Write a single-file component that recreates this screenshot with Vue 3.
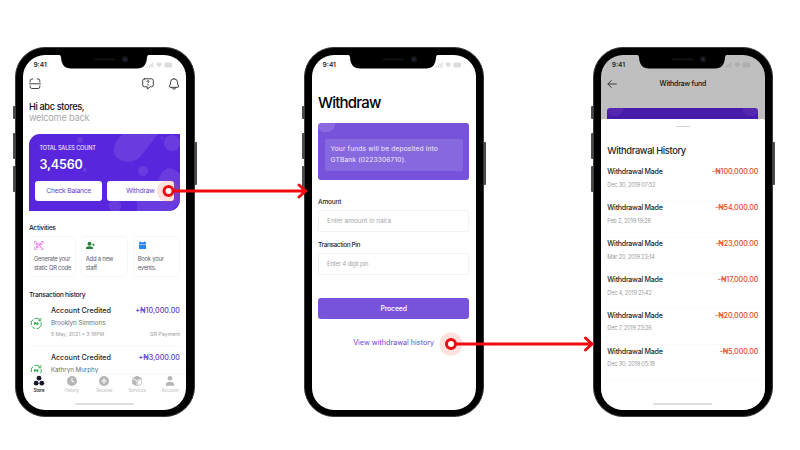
<script setup>
const activities = [
  { id: 'qr', lines: ['Generate your', 'static QR code'] },
  { id: 'staff', lines: ['Add a new', 'staff'] },
  { id: 'event', lines: ['Book your', 'events.'] },
]
const credits = [
  { name: 'Brooklyn Simmons', amount: '+₦10,000.00', date: '5 May, 2021 • 3:16PM', type: 'QR Payment' },
  { name: 'Kathryn Murphy', amount: '+₦3,000.00' },
]
const tabs = ['Store', 'History', 'Receive', 'Services', 'Account']
const withdrawals = [
  { date: 'Dec 30, 2019 07:52', amount: '-₦100,000.00' },
  { date: 'Feb 2, 2019 19:28', amount: '-₦54,000.00' },
  { date: 'Mar 20, 2019 23:14', amount: '-₦23,000.00' },
  { date: 'Dec 4, 2019 21:42', amount: '-₦17,000.00' },
  { date: 'Dec 7, 2019 23:26', amount: '-₦20,000.00' },
  { date: 'Dec 30, 2019 05:18', amount: '-₦5,000.00' },
]
const phones = ['store', 'withdraw', 'history']
const links = [{ x: 168.5, y: 191, e: 307 }, { x: 451, y: 344, e: 593.5 }]
</script>

<template>
  <main class="board">
    <section v-for="phone in phones" :key="phone" class="phone">
      <i class="key mute"></i><i class="key up"></i><i class="key down"></i><i class="key power"></i>
      <div class="screen" :class="phone">
        <div class="status">
          <span class="time">9:41</span>
          <svg class="signal" width="26" height="6" viewBox="0 0 26 6">
            <path d="M0 4h1.2v1.5H0zM1.8 3H3v2.5H1.8zM3.600 1.700h1.200v3.800H3.600zM5.300.5h1.200v5H5.300z" />
            <path d="M9 1.900Q12.200-.8 15.400 1.900L12.200 5.500z" />
            <rect x="17.500" y=".6" width="7.500" height="4.800" rx="1.200" />
          </svg>
        </div>

        <template v-if="phone === 'store'">
          <header class="tools">
            <svg width="12" height="12" viewBox="0 0 12 12" class="line">
              <path d="M1.200 4V2.600Q1.200 1 2.800 1H3.800M8.200 1H9.200Q10.800 1 10.800 2.600V4M.5 5.800H11.500M1.200 7.800V8.800Q1.200 10.500 2.800 10.500H9.200Q10.800 10.500 10.800 8.800V7.800" />
            </svg>
            <svg width="12" height="12" viewBox="0 0 12 12" class="line help">
              <path d="M2.500.8H9.500Q11.300.8 11.300 2.600V7Q11.300 8.800 9.500 8.800H8.300L5.300 11V8.800H2.500Q.7 8.800.7 7V2.600Q.7.8 2.500.8Z" />
              <path d="M4.900 3.600Q5 2.700 6 2.700 7.200 2.800 7 3.800 6.800 4.400 6 5M6 6.500v.5" />
            </svg>
            <svg width="12" height="12" viewBox="0 0 12 12" class="line">
              <path d="M6 .7Q9.300.8 9.500 4.200V6L10.600 8Q11 9.100 10 9.300H2Q1 9.100 1.400 8L2.500 6V4.200Q2.700.8 6 .7ZM4.200 9.600Q4.500 11.200 6 11.200T7.800 9.600" />
            </svg>
          </header>
          <div class="greet"><b>Hi abc stores,</b><span>welcome back</span></div>
          <div class="sales">
            <svg class="blobs" width="151" height="78" viewBox="0 0 151 78">
              <path d="M93 0h36L112 22Q104 30 94 27 80 22 87 8z" />
              <circle cx="143" cy="9" r="8" /><circle cx="133" cy="4" r="1.500" />
              <circle cx="114" cy="37" r="5" /><circle cx="51" cy="6" r="3" /><circle cx="56" cy="36" r="2" />
              <path d="M123 60 132 40Q138 31 146 36L151 40V68L141 78H108V65Z" />
              <circle cx="86" cy="72" r="6" />
            </svg>
            <small>TOTAL SALES COUNT</small>
            <strong>3,4560</strong>
            <div class="actions"><button>Check Balance</button><button>Withdraw</button></div>
          </div>
          <h3 class="sub act">Activities</h3>
          <div class="cards">
            <article v-for="a in activities" :key="a.id">
              <svg v-if="a.id === 'qr'" width="10" height="9" viewBox="0 0 10 9" fill="none" stroke="#e267df" stroke-width=".8">
                <path d="M.6 2.600V.6H2.700M7 .6H9V2.600M9 6.300V8.400H7M2.700 8.400H.6V6.300M2.200 2.200h1.800v1.600H2.200zM5.700 2.200h1.700v1.600H5.700zM2.200 5.300h1.800v1.500H2.200zM5.700 5.200 7.500 6.900M7.400 5.100 5.600 6.800M4.300 4.500h1.500" />
              </svg>
              <svg v-else-if="a.id === 'staff'" width="10" height="9" viewBox="0 0 10 9" fill="#2b7e3a">
                <circle cx="3.500" cy="2.800" r="2" /><path d="M0 8V7Q0 5.400 3.500 5.300 7 5.400 7 7V8zM6 3.500h1V2.600h.8v.9h1v.8h-1v.9H7v-.9H6z" />
              </svg>
              <svg v-else width="10" height="9" viewBox="0 0 10 9" fill="#2786ef">
                <path d="M1 1.300H2V.6H3V1.300H6V.6H7V1.300H8V3H1zM1 3.500H8V7.400Q8 8 7.400 8H1.600Q1 8 1 7.400z" />
              </svg>
              <p v-for="l in a.lines" :key="l">{{ l }}</p>
            </article>
          </div>
          <h3 class="sub tx">Transaction history</h3>
          <div class="credits">
            <div v-for="c in credits" :key="c.name" class="credit">
              <svg width="13" height="13" viewBox="0 0 13 13" fill="none" stroke="#39a957" stroke-width="1">
                <path d="M8.500 1.700A5 5 0 0 0 4.500 1.600M3 2.500A5 5 0 0 0 1.400 8M2 9.400A5 5 0 0 0 5 11.500M6.500 11.700A5 5 0 0 0 11.100 5.200M11.700 1 9.200 3.600M9 1.500V3.800H11.300" />
                <path d="M4.700 8.200V5L7.700 8.200V5M4 6.600H8.400" />
              </svg>
              <div class="info">
                <div class="pair"><b>Account Credited</b><em>{{ c.amount }}</em></div>
                <div class="name">{{ c.name }}</div>
                <div v-if="c.date" class="pair meta"><span>{{ c.date }}</span><span>{{ c.type }}</span></div>
              </div>
            </div>
          </div>
          <nav>
            <div v-for="(t, i) in tabs" :key="t" :class="{ on: i === 0 }">
              <svg width="12" height="12" viewBox="0 0 12 12" fill="currentColor">
                <g v-if="i === 0"><circle cx="6" cy="3.200" r="2.400" /><circle cx="3.200" cy="8.200" r="2.400" /><circle cx="8.800" cy="8.200" r="2.400" /></g>
                <g v-else-if="i === 1"><circle cx="6" cy="6" r="5" /><path d="M6 3V6.300L8.300 7" stroke="#fff" fill="none" /></g>
                <g v-else-if="i === 2"><circle cx="6" cy="6" r="5" /><path d="M6 3.300V8.700M3.300 6H8.700" stroke="#fff" stroke-width="1.200" /></g>
                <g v-else-if="i === 3"><path d="M6 .8 10.600 2.900 6 5.200 1.400 2.900zM1.200 3.700 5.600 5.900V11.200L1.200 9z" /><path d="M6.300 5.800 10.600 3.700V8.900L6.300 11z" fill="none" stroke="currentColor" stroke-width=".7" /></g>
                <g v-else><circle cx="6" cy="3.300" r="2.300" /><path d="M1.700 10.700Q1.400 6.700 6 6.700T10.300 10.700z" /></g>
              </svg>
              <span>{{ t }}</span>
            </div>
          </nav>
          <i class="home"></i>
        </template>

        <template v-else-if="phone === 'withdraw'">
          <h1>Withdraw</h1>
          <div class="notice"><div><p>Your funds will be deposited into</p><p>GTBank (0223306710).</p></div></div>
          <label>Amount</label>
          <div class="field">Enter amount in naira</div>
          <label class="tight">Transaction Pin</label>
          <div class="field pin">Enter 4 digit pin</div>
          <button class="proceed">Proceed</button>
          <a>View withdrawal history</a>
        </template>

        <template v-else>
          <header class="bar">
            <svg width="10" height="8" viewBox="0 0 10 8" class="line"><path d="M4.300.6.900 4 4.300 7.400M1 4H9.300" /></svg>
            <b>Withdraw fund</b>
          </header>
          <div class="peek"></div>
          <div class="sheet">
            <i class="grip"></i>
            <h2>Withdrawal History</h2>
            <div v-for="w in withdrawals" :key="w.date" class="wrow">
              <div class="pair"><b>Withdrawal Made</b><em>{{ w.amount }}</em></div>
              <span>{{ w.date }}</span>
            </div>
            <i class="home"></i>
          </div>
        </template>
      </div>
      <svg class="notch" width="92" height="16" viewBox="0 0 92 16">
        <path d="M0 0H92Q89.500.3 89 3 88.500 14.500 79 14.500H13Q3.500 14.500 3 3 2.500.3 0 0Z" fill="#000" />
        <rect x="36" y="4.500" width="21" height="1.800" rx=".9" fill="#151517" />
        <circle cx="67" cy="5.300" r="3" fill="#15171d" /><circle cx="67" cy="5.300" r="1.200" fill="#232a3c" />
      </svg>
    </section>

    <svg class="flow" width="800" height="450" viewBox="0 0 800 450" fill="none" stroke="#f00a10">
      <g v-for="f in links" :key="f.x">
        <circle :cx="f.x" :cy="f.y" r="11.500" fill="#f44336" fill-opacity=".16" stroke="none" />
        <path :d="`M${f.x + 5} ${f.y}H${f.e - 1}M${f.e - 8} ${f.y - 6}L${f.e - 1.5} ${f.y}L${f.e - 8} ${f.y + 6}`" stroke-width="2.900" stroke-linecap="round" />
        <circle :cx="f.x" :cy="f.y" r="4.500" fill="#fff" stroke-width="3" />
      </g>
    </svg>
  </main>
</template>

<style>
body { background: #fff; }
</style>

<style scoped>
* { box-sizing: border-box; margin: 0; padding: 0; }
i, em { font-style: normal; }
svg { display: block; flex: none; }
.board { position: relative; width: 800px; height: 450px; overflow: hidden; display: flex; gap: 109.700px; padding: 47.300px 0 0 15px; font-family: Inter, sans-serif; color: #25252f; white-space: nowrap; }
.phone { position: relative; flex: none; width: 179.500px; height: 370px; border-radius: 30px; background: #000; border: 1.300px solid #3b3b3e; padding: 6.400px 7.200px 6.400px 6.600px; }
.key { position: absolute; left: -3px; width: 2px; background: #4b4b4e; border-radius: 1px 0 0 1px; }
.mute { top: 58px; height: 13px; } .up { top: 85px; height: 26px; } .down { top: 118px; height: 26px; }
.power { left: auto; right: -3px; top: 94px; height: 43px; border-radius: 0 1px 1px 0; }
.notch { position: absolute; left: 42px; top: 6px; }
.screen { width: 100%; height: 100%; border-radius: 22px; background: #fff; overflow: hidden; display: flex; flex-direction: column; padding: 0 6.300px; }
.status { height: 20.500px; display: flex; justify-content: space-between; align-items: center; padding: 0 7px 0 4.500px; flex: none; }
.time { font-size: 6.600px; font-weight: 600; }
.signal { fill: #dcdcdc; }
.line { fill: none; stroke: #2c2c33; stroke-width: .9; stroke-linecap: round; stroke-linejoin: round; }
.tools { display: flex; height: 17.500px; align-items: center; gap: 14.500px; }
.help { margin-left: auto; }
.greet { padding-top: 8px; height: 41px; flex: none; font-size: 9.200px; line-height: 11.800px; display: flex; flex-direction: column; letter-spacing: -.35px; }
.greet b { font-weight: 500; color: #101014; } .greet span { color: #a9a9a9; letter-spacing: -.2px; }
.sales { position: relative; height: 77.500px; flex: none; border-radius: 11px 0 11px 0; background: #5826dc; color: #fff; padding: 10px 6.500px 0; display: flex; flex-direction: column; overflow: hidden; }
.sales > * { position: relative; }
.sales .blobs { position: absolute; left: 0; top: 0; fill: #fff; opacity: .1; }
small { font-size: 5.600px; line-height: 9px; padding-left: 4px; font-weight: 500; opacity: .9; letter-spacing: -.15px; }
strong { font-size: 12.500px; line-height: 16px; padding-left: 4px; margin-top: 4px; font-weight: 600; letter-spacing: -.15px; }
.actions { display: flex; gap: 5px; margin-top: 8px; }
button { font-family: inherit; border: 0; }
.actions button { flex: 1; height: 20.500px; border-radius: 3px; background: #fff; color: #6a42d8; font-size: 6.800px; letter-spacing: -.25px; }
.sub { font-size: 6.800px; line-height: 10px; font-weight: 500; letter-spacing: -.32px; }
.act { margin-top: 12.300px; } .tx { margin-top: 12.200px; }
.cards { display: flex; gap: 4.500px; margin-top: 3px; }
.cards article { flex: 1 1 0; min-width: 0; height: 41px; border: 1px solid #f7f7f9; border-radius: 4px; padding: 4px 0 0 4px; }
.cards svg { margin-bottom: 3.500px; }
.cards p { font-size: 5.900px; line-height: 9.300px; color: #5e5e68; letter-spacing: -.25px; }
.credits { height: 73.800px; overflow: hidden; flex: none; }
.credit { height: 47px; padding-top: 6.200px; display: flex; gap: 8.500px; border-bottom: 1px solid #f8f8f8; }
.credit > svg { margin: 11.500px -1px 0 1.500px; }
.info { flex: 1; }
.pair { display: flex; justify-content: space-between; }
.credit .pair b { font-size: 7.200px; line-height: 10px; font-weight: 500; }
.pair em { font-size: 7.200px; line-height: 10px; font-weight: 500; }
.credit em { color: #6039cf; }
.name { font-size: 6.300px; line-height: 10px; margin-top: 2px; color: #6e6e76; letter-spacing: -.05px; }
.credit .meta { font-size: 5.200px; line-height: 8px; margin-top: 2px; color: #9c9ca1; }
nav { display: flex; margin: 0 -6.300px; height: 22px; flex: none; border-top: 1px solid #f7f7f7; padding-top: 1px; }
nav div { flex: 1; display: flex; flex-direction: column; align-items: center; color: #b5b5b5; }
nav span { font-size: 4.300px; line-height: 6px; margin-top: 1px; } nav .on { color: #17172b; } nav .on span { font-weight: 600; }
.home { display: block; flex: none; width: 59px; height: 1.500px; border-radius: 1px; background: #ddd; margin: 8px auto 0; }
h1 { font-size: 15px; line-height: 20px; font-weight: 500; letter-spacing: -.85px; letter-spacing: -.8px; color: #000; margin-top: 18px; }
.notice { margin-top: 9.500px; height: 57px; flex: none; border-radius: 3px; background: radial-gradient(circle at 8px 0, #8a6ae1 9px, transparent 9.500px), #7653da; padding: 16px 6.500px 0; }
.notice div { height: 32px; border-radius: 2px; background: #8668df; padding: 5.500px 6px; color: #f1edfc; font-size: 6.700px; line-height: 10.500px; letter-spacing: .12px; }
label { font-size: 6.500px; line-height: 9px; font-weight: 500; margin-top: 18px; letter-spacing: -.2px; }
.tight { letter-spacing: -.4px; }
.field { height: 22px; border: 1px solid #f2f2f4; border-radius: 2px; margin-top: 3px; padding-left: 8px; font-size: 6.600px; line-height: 20.500px; color: #a8a8ac; flex: none; letter-spacing: -.1px; }
.field + label { margin-top: 9.500px; }
.field.pin { font-size: 6.200px; letter-spacing: -.3px; }
.proceed { height: 21px; border-radius: 3px; background: #7653da; color: #fff; font-size: 6.900px; font-weight: 500; margin-top: 22.700px; flex: none; letter-spacing: -.15px; }
a { color: #6a44d4; font-size: 7.200px; line-height: 10px; text-align: center; margin-top: 18.800px; }
.history { background: #bfbfbf; padding: 0; }
.history .status { padding: 0 13.300px 0 10.800px; }
.history .signal { fill: #aeaeae; }
.bar { height: 17.500px; flex: none; display: flex; align-items: center; padding-left: 6px; }
.bar b { flex: 1; font-size: 7px; font-weight: 500; text-align: center; padding-right: 16px; color: #111; letter-spacing: -.23px; }
.peek { height: 11px; margin: 15px 6.300px 0; border-radius: 3px 3px 0 0; background: radial-gradient(circle at 8px 0, #5527b0 8px, transparent 8.500px), radial-gradient(circle at 144px 0, #5527b0 8px, transparent 8.500px), #481ba9; flex: none; }
.sheet { flex: 1; background: #fff; border-radius: 2px 2px 0 0; padding: 7px 6.300px 5px; display: flex; flex-direction: column; }
.sheet .home { margin: auto auto 0; }
.grip { display: block; flex: none; width: 14px; height: 1px; background: #d5d5d5; margin: 0 auto; }
h2 { font-size: 9.300px; line-height: 12px; font-weight: 500; margin-top: 18px; margin-bottom: 9.200px; letter-spacing: -.35px; }
.wrow { height: 35.900px; border-bottom: 1px solid #fafafa; padding-top: 1.200px; flex: none; }
.wrow b { font-size: 7.100px; line-height: 10px; font-weight: 500; letter-spacing: -.27px; }
.wrow em { color: #e8492b; letter-spacing: -.12px; }
.wrow span { display: block; font-size: 5.700px; line-height: 8px; margin-top: 3.800px; color: #9b9ba0; letter-spacing: -.22px; }
.flow { position: absolute; left: 0; top: 0; }
</style>
